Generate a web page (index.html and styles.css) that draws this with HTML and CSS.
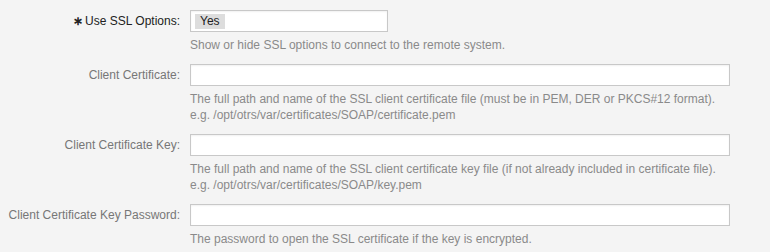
FILE: index.html
```html
<!DOCTYPE html>
<html lang="en">
<head>
    <meta charset="UTF-8">
    <title>SSL Options</title>
    <link rel="stylesheet" href="styles.css">
</head>
<body>
    <fieldset class="form">
        <div class="row">
            <label class="label required"><span class="star">∗</span>Use SSL Options:</label>
            <div class="field">
                <div class="select small"><span class="chip">Yes</span></div>
                <p class="help">Show or hide SSL options to connect to the remote system.</p>
            </div>
        </div>
        <div class="row">
            <label class="label">Client Certificate:</label>
            <div class="field">
                <input class="input" type="text">
                <p class="help">The full path and name of the SSL client certificate file (must be in PEM, DER or PKCS#12 format).<br>e.g. /opt/otrs/var/certificates/SOAP/certificate.pem</p>
            </div>
        </div>
        <div class="row">
            <label class="label">Client Certificate Key:</label>
            <div class="field">
                <input class="input" type="text">
                <p class="help">The full path and name of the SSL client certificate key file (if not already included in certificate file).<br>e.g. /opt/otrs/var/certificates/SOAP/key.pem</p>
            </div>
        </div>
        <div class="row">
            <label class="label">Client Certificate Key Password:</label>
            <div class="field">
                <input class="input" type="password">
                <p class="help">The password to open the SSL certificate if the key is encrypted.</p>
            </div>
        </div>
    </fieldset>
</body>
</html>
```

FILE: styles.css
```css
body {
    margin: 0;
    background: #f4f4f4;
    font-family: Arial, "Liberation Sans", sans-serif;
    font-size: 12px;
}
.form {
    margin: 0;
    padding: 10px 0 0 0;
    border: 0;
}
.row {
    display: flex;
    margin-bottom: 11px;
}
.label {
    width: 180px;
    height: 22px;
    line-height: 22px;
    text-align: right;
    padding-right: 10px;
    color: #777;
    flex-shrink: 0;
}
.label.required {
    color: #222;
}
.star {
    font-weight: bold;
    margin-right: 2px;
}
.field {
    flex: 0 0 540px;
}
.input,
.select {
    box-sizing: border-box;
    display: block;
    width: 540px;
    height: 22px;
    margin: 0;
    border: 1px solid #c8c8c8;
    background: #fff;
    box-shadow: inset 0 1px 2px rgba(0, 0, 0, 0.06);
}
.select.small {
    width: 198px;
    padding: 3px 4px;
}
.chip {
    display: inline-block;
    background: #dddddd;
    color: #222;
    padding: 0 5px;
    line-height: 15px;
    height: 15px;
}
.help {
    margin: 5px 0 0 0;
    line-height: 16px;
    color: #8a8a8a;
}
```
